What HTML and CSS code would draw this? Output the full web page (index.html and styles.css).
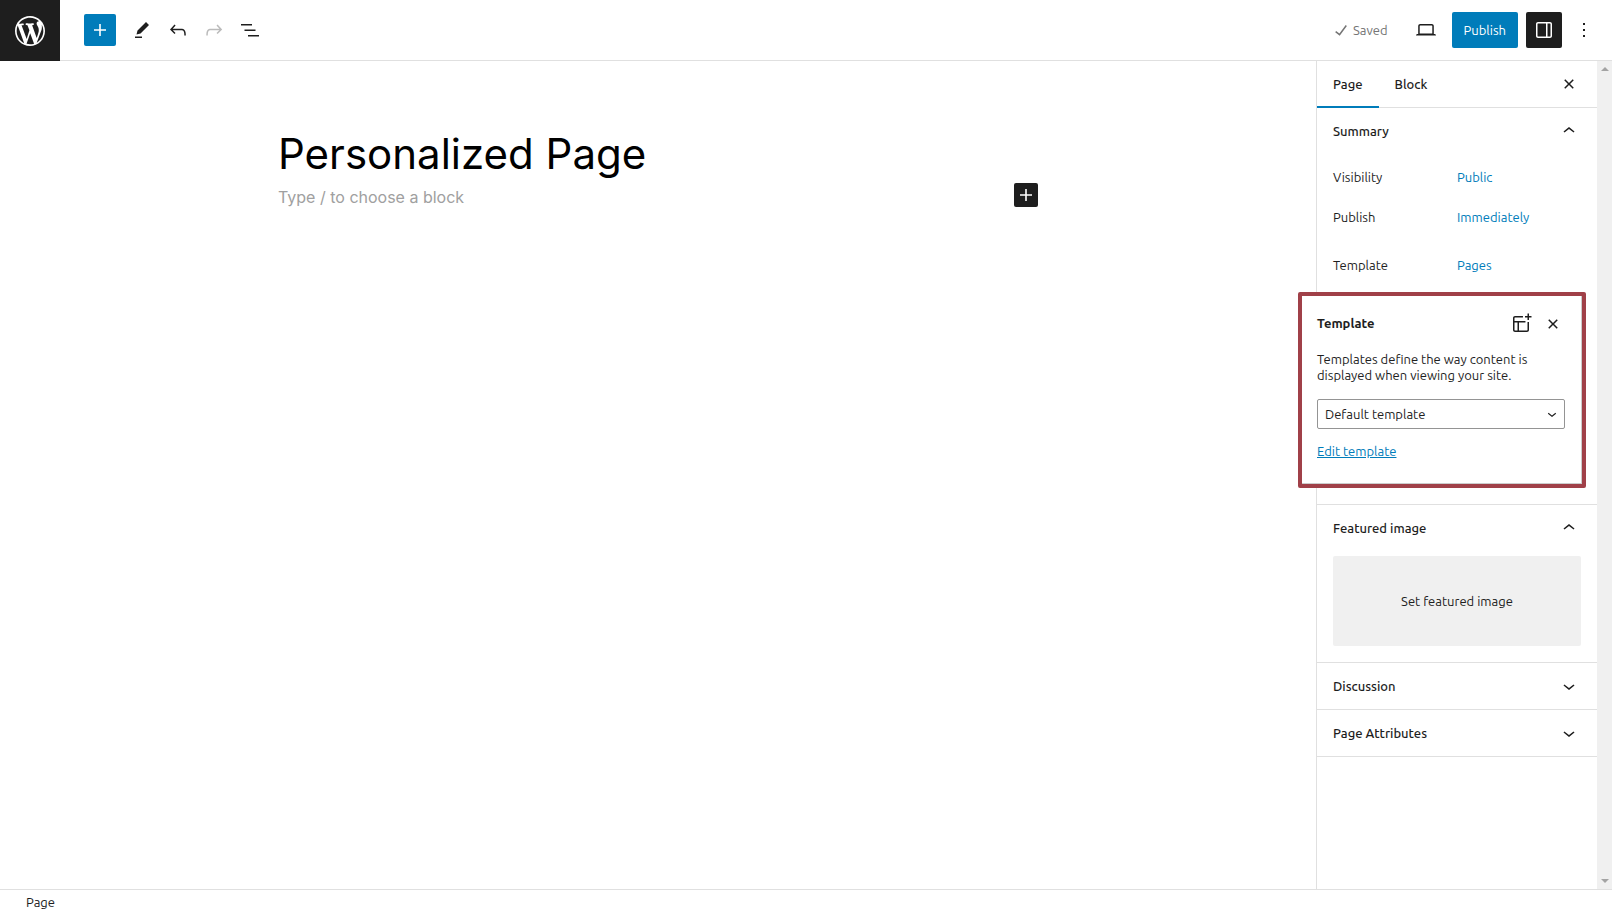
FILE: index.html
```html
<!DOCTYPE html>
<html lang="en">
<head>
    <meta charset="UTF-8">
    <title>Edit Page</title>
    <link rel="stylesheet" href="styles.css">
</head>
<body>
    <header class="header">
        <a class="site-logo" href="#" aria-label="View Pages">
            <svg width="36" height="36" viewBox="-2 -2 24 24"><path d="M20 10c0-5.51-4.49-10-10-10C4.48 0 0 4.49 0 10c0 5.52 4.48 10 10 10 5.51 0 10-4.48 10-10zM7.78 15.37L4.37 6.22c.55-.02 1.17-.08 1.17-.08.5-.06.44-1.13-.06-1.11 0 0-1.45.11-2.37.11-.18 0-.37 0-.58-.01C4.12 2.69 6.87 1.11 10 1.11c2.33 0 4.45.87 6.05 2.34-.68-.11-1.65.39-1.65 1.58 0 .74.45 1.36.9 2.1.35.61.55 1.36.55 2.46 0 1.49-1.4 5-1.4 5l-3.03-8.37c.54-.02.82-.17.82-.17.5-.05.44-1.25-.06-1.22 0 0-1.44.12-2.38.12-.87 0-2.33-.12-2.33-.12-.5-.03-.56 1.2-.06 1.22l.92.08 1.26 3.41zM17.41 10c.24-.64.74-1.87.43-4.25.7 1.29 1.05 2.71 1.05 4.25 0 3.29-1.73 6.24-4.4 7.78.97-2.59 1.94-5.2 2.92-7.78zM6.1 18.09C3.12 16.65 1.11 13.53 1.11 10c0-1.3.23-2.48.72-3.59C3.25 10.3 4.67 14.2 6.1 18.09zm4.03-6.63l2.58 6.98c-.86.29-1.76.45-2.71.45-.79 0-1.57-.11-2.29-.33.81-2.38 1.62-4.74 2.42-7.1z"/></svg>
        </a>
        <div class="toolbar">
            <button type="button" class="inserter-toggle" aria-label="Toggle block inserter">
                <svg width="24" height="24" viewBox="0 0 24 24"><path d="M18 11.2h-5.2V6h-1.6v5.2H6v1.6h5.2V18h1.6v-5.2H18z"/></svg>
            </button>
            <button type="button" class="icon-button" aria-label="Tools">
                <svg width="24" height="24" viewBox="0 0 24 24"><path d="m19 7-3-3-8.5 8.5-1 4 4-1L19 7Zm-7 11.5H5V20h7v-1.5Z"/></svg>
            </button>
            <button type="button" class="icon-button" aria-label="Undo">
                <svg width="24" height="24" viewBox="0 0 24 24"><path d="M18.3 11.7c-.6-.6-1.4-.9-2.3-.9H6.7l2.9-3.3-1.1-1-4.5 5L8.5 16l1-1-2.7-2.7H16c.5 0 .9.2 1.3.5 1 1 1 3.4 1 4.5v.3h1.5v-.2c0-1.5 0-4.3-1.5-5.7z"/></svg>
            </button>
            <button type="button" class="icon-button" aria-label="Redo" disabled>
                <svg width="24" height="24" viewBox="0 0 24 24"><path d="M15.6 6.5l-1.1 1 2.9 3.3H8c-.9 0-1.7.3-2.3.9-1.4 1.5-1.4 4.2-1.4 5.6v.2h1.5v-.3c0-1.1 0-3.5 1-4.5.3-.3.7-.5 1.3-.5h9.2L14.5 15l1.1 1.1 4.6-4.6-4.6-5z"/></svg>
            </button>
            <button type="button" class="icon-button" aria-label="List View">
                <svg width="24" height="24" viewBox="0 0 24 24"><path d="M3 6h11v1.5H3V6Zm3.5 5.5h11V13h-11v-1.5ZM21 17H10v1.5h11V17Z"/></svg>
            </button>
        </div>
        <div class="settings">
            <span class="saved">
                <svg width="24" height="24" viewBox="0 0 24 24"><path d="M16.7 7.1l-6.3 8.5-3.3-2.5-.9 1.2 4.5 3.4L17.9 8z"/></svg>
                Saved
            </span>
            <button type="button" class="icon-button" aria-label="Preview">
                <svg width="24" height="24" viewBox="0 0 24 24"><path d="M20.5 16h-.7V8c0-1.1-.9-2-2-2H6.2c-1.1 0-2 .9-2 2v8h-.7c-.8 0-1.5.7-1.5 1.5h20c0-.8-.7-1.5-1.5-1.5zM5.7 8c0-.3.2-.5.5-.5h11.6c.3 0 .5.2.5.5v7.6H5.7V8z"/></svg>
            </button>
            <button type="button" class="publish">Publish</button>
            <button type="button" class="icon-button pressed" aria-label="Settings">
                <svg width="24" height="24" viewBox="0 0 24 24"><path fill-rule="evenodd" d="M18 4H6c-1.1 0-2 .9-2 2v12c0 1.1.9 2 2 2h12c1.1 0 2-.9 2-2V6c0-1.1-.9-2-2-2zm-4 14.5H6c-.3 0-.5-.2-.5-.5V6c0-.3.2-.5.5-.5h8v13zm4.5-.5c0 .3-.2.5-.5.5h-2.5v-13H18c.3 0 .5.2.5.5v12z"/></svg>
            </button>
            <button type="button" class="icon-button narrow" aria-label="Options">
                <svg width="24" height="24" viewBox="0 0 24 24"><path d="M13 19h-2v-2h2v2zm0-6h-2v-2h2v2zm0-6h-2V5h2v2z"/></svg>
            </button>
        </div>
    </header>

    <div class="editor">
        <main class="canvas">
            <div class="content">
                <h1>Personalized Page</h1>
                <div class="block-row">
                    <input type="text" class="block-input" placeholder="Type / to choose a block" aria-label="Add default block">
                    <button type="button" class="add-block" aria-label="Add block">
                        <svg width="24" height="24" viewBox="0 0 24 24"><path d="M18 11.2h-5.2V6h-1.6v5.2H6v1.6h5.2V18h1.6v-5.2H18z"/></svg>
                    </button>
                </div>
            </div>
        </main>

        <aside class="sidebar">
            <div class="tabs">
                <button type="button" class="tab active">Page</button>
                <button type="button" class="tab">Block</button>
                <button type="button" class="close" aria-label="Close settings">
                    <svg width="24" height="24" viewBox="0 0 24 24"><path d="M12 13.06l3.712 3.713 1.061-1.06L13.061 12l3.712-3.712-1.06-1.06L12 10.938 8.288 7.227l-1.061 1.06L10.939 12l-3.712 3.712 1.06 1.061L12 13.061z"/></svg>
                </button>
            </div>

            <section class="panel summary">
                <button type="button" class="panel-title">Summary
                    <svg width="24" height="24" viewBox="0 0 24 24"><path d="M6.5 12.4L12 8l5.5 4.4-.9 1.2L12 10l-4.5 3.6-1-1.2z"/></svg>
                </button>
                <div class="rows">
                    <div class="row">
                        <span class="row-label">Visibility</span>
                        <button type="button" class="link-button">Public</button>
                    </div>
                    <div class="row">
                        <span class="row-label">Publish</span>
                        <button type="button" class="link-button">Immediately</button>
                    </div>
                    <div class="row template-row">
                        <span class="row-label">Template</span>
                        <button type="button" class="link-button">Pages</button>

                        <div class="popover">
                            <div class="popover-header">
                                <h2>Template</h2>
                                <button type="button" class="small-button" aria-label="Add template">
                                    <svg width="24" height="24" viewBox="0 0 24 24"><path fill-rule="evenodd" d="M18.5 5.5V8H20V5.5H22.5V4H20V1.5H18.5V4H16V5.5H18.5ZM13.9624 4H6C4.89543 4 4 4.89543 4 6V18C4 19.1046 4.89543 20 6 20H18C19.1046 20 20 19.1046 20 18V10.0391H18.5V18C18.5 18.2761 18.2761 18.5 18 18.5H10L10 10.4917L16.4589 10.5139L16.4641 9.01389L5.5 8.97618V6C5.5 5.72386 5.72386 5.5 6 5.5H13.9624V4ZM5.5 10.4762V18C5.5 18.2761 5.72386 18.5 6 18.5H8.5L8.5 10.4865L5.5 10.4762Z"/></svg>
                                </button>
                                <button type="button" class="small-button" aria-label="Close">
                                    <svg width="24" height="24" viewBox="0 0 24 24"><path d="M12 13.06l3.712 3.713 1.061-1.06L13.061 12l3.712-3.712-1.06-1.06L12 10.938 8.288 7.227l-1.061 1.06L10.939 12l-3.712 3.712 1.06 1.061L12 13.061z"/></svg>
                                </button>
                            </div>
                            <p>Templates define the way content is displayed when viewing your site.</p>
                            <div class="select-wrap">
                                <select aria-label="Template">
                                    <option>Default template</option>
                                </select>
                                <svg width="18" height="18" viewBox="0 0 24 24"><path d="M17.5 11.6L12 16l-5.5-4.4.9-1.2L12 14l4.5-3.6 1 1.2z"/></svg>
                            </div>
                            <a class="edit-link" href="#">Edit template</a>
                        </div>
                    </div>
                </div>
            </section>

            <section class="panel">
                <button type="button" class="panel-title">Featured image
                    <svg width="24" height="24" viewBox="0 0 24 24"><path d="M6.5 12.4L12 8l5.5 4.4-.9 1.2L12 10l-4.5 3.6-1-1.2z"/></svg>
                </button>
                <button type="button" class="featured-image">Set featured image</button>
            </section>

            <section class="panel">
                <button type="button" class="panel-title">Discussion
                    <svg width="24" height="24" viewBox="0 0 24 24"><path d="M17.5 11.6L12 16l-5.5-4.4.9-1.2L12 14l4.5-3.6 1 1.2z"/></svg>
                </button>
            </section>

            <section class="panel">
                <button type="button" class="panel-title">Page Attributes
                    <svg width="24" height="24" viewBox="0 0 24 24"><path d="M17.5 11.6L12 16l-5.5-4.4.9-1.2L12 14l4.5-3.6 1 1.2z"/></svg>
                </button>
            </section>
        </aside>

        <div class="scrollbar">
            <span class="arrow-up"></span>
            <span class="arrow-down"></span>
        </div>
    </div>

    <footer class="footer">Page</footer>
</body>
</html>
```
FILE: styles.css
```css
* {
    box-sizing: border-box;
}

body {
    margin: 0;
    height: 100vh;
    display: flex;
    flex-direction: column;
    background: #fff;
    color: #1e1e1e;
    font-family: Ubuntu, "Noto Sans", sans-serif;
    font-size: 13px;
    line-height: 16px;
}

button {
    display: flex;
    align-items: center;
    justify-content: center;
    padding: 0;
    border: none;
    background: none;
    color: inherit;
    font: inherit;
    cursor: pointer;
}

svg {
    display: block;
    flex: none;
    fill: currentColor;
}

/* top bar */
.header {
    display: flex;
    align-items: center;
    height: 61px;
    border-bottom: 1px solid #e0e0e0;
}

.site-logo {
    display: flex;
    align-items: center;
    justify-content: center;
    width: 60px;
    height: 61px;
    margin-bottom: -1px;
    background: #1e1e1e;
    color: #fff;
}

.toolbar {
    display: flex;
    align-items: center;
    padding-left: 24px;
}

.inserter-toggle {
    width: 32px;
    height: 32px;
    margin-right: 8px;
    border-radius: 2px;
    background: #007cba;
    color: #fff;
}

.icon-button {
    width: 36px;
    height: 36px;
    border-radius: 2px;
}

.icon-button:disabled {
    color: #bbb;
}

.icon-button.pressed {
    background: #1e1e1e;
    color: #fff;
}

.icon-button.narrow {
    width: 28px;
}

.settings {
    display: flex;
    align-items: center;
    gap: 8px;
    margin-left: auto;
    padding-right: 14px;
}

.saved {
    display: flex;
    align-items: center;
    margin-right: 12px;
    color: #757575;
}

.publish {
    height: 36px;
    padding: 0 12px;
    border-radius: 2px;
    background: #007cba;
    color: #fff;
}

/* editor area */
.editor {
    display: flex;
    flex: 1;
    min-height: 0;
}

.canvas {
    flex: 1;
}

.content {
    max-width: 760px;
    margin: 0 auto;
    padding-top: 68px;
    font-family: Inter, sans-serif;
}

.content h1 {
    margin: 0;
    color: #000;
    font-size: 42px;
    font-weight: 400;
    line-height: 50px;
}

.block-row {
    display: flex;
    align-items: flex-start;
    padding-top: 4px;
}

.block-input {
    flex: 1;
    height: 28px;
    padding: 0;
    border: none;
    outline: none;
    font: 16px/28px Inter, sans-serif;
}

.block-input::placeholder {
    color: #a0a0a0;
}

.add-block {
    width: 24px;
    height: 24px;
    border-radius: 2px;
    background: #1e1e1e;
    color: #fff;
}

/* settings sidebar */
.sidebar {
    width: 281px;
    border-left: 1px solid #e0e0e0;
}

.tabs {
    display: flex;
    height: 47px;
    border-bottom: 1px solid #e0e0e0;
}

.tab {
    height: 47px;
    padding: 0 16px 2px;
    font-weight: 500;
}

.tab.active {
    box-shadow: inset 0 -2px #007cba;
}

.close {
    width: 24px;
    margin-left: auto;
    margin-right: 16px;
}

.panel {
    border-bottom: 1px solid #e0e0e0;
}

.panel-title {
    justify-content: space-between;
    width: 100%;
    height: 46px;
    padding: 0 16px;
    font-weight: 500;
}

.summary {
    height: 397px;
}

.rows {
    padding: 5px 16px;
}

.row {
    display: flex;
    align-items: center;
    height: 36px;
    margin-bottom: 4px;
}

.row-label {
    width: 124px;
}

.link-button {
    color: #007cba;
}

.template-row {
    position: relative;
    margin-top: 12px;
}

.popover {
    position: absolute;
    top: 45px;
    left: -35px;
    width: 288px;
    height: 196px;
    padding: 16px 17px 16px 15px;
    border: 4px solid #a04048;
    border-radius: 2px;
    background: #fff;
    box-shadow: inset -1px -1px #ccc;
}

.popover-header {
    display: flex;
    align-items: center;
    gap: 8px;
    height: 24px;
}

.popover-header h2 {
    flex: 1;
    margin: 0;
    padding-bottom: 2px;
    font-size: 13px;
    font-weight: 600;
    line-height: 16px;
}

.small-button {
    width: 24px;
    height: 24px;
}

.popover p {
    margin: 15px 0 16px;
}

.select-wrap {
    position: relative;
    margin-bottom: 14px;
}

.select-wrap select {
    display: block;
    width: 100%;
    height: 30px;
    padding: 0 26px 0 7px;
    border: 1px solid #949494;
    border-radius: 2px;
    background: #fff;
    color: inherit;
    font: inherit;
    appearance: none;
}

.select-wrap svg {
    position: absolute;
    top: 6px;
    right: 4px;
    pointer-events: none;
}

.edit-link {
    color: #007cba;
}

.featured-image {
    width: calc(100% - 32px);
    height: 90px;
    margin: 5px 16px 16px;
    border-radius: 2px;
    background: #f0f0f0;
}

.scrollbar {
    display: flex;
    flex-direction: column;
    align-items: center;
    justify-content: space-between;
    width: 15px;
    padding: 6px 0;
    background: #f0f0f0;
}

.arrow-up,
.arrow-down {
    border: 4px solid transparent;
}

.arrow-up {
    border-top: none;
    border-bottom-color: #a3a3a3;
}

.arrow-down {
    border-bottom: none;
    border-top-color: #a3a3a3;
}

.footer {
    height: 25px;
    padding: 4px 26px;
    border-top: 1px solid #e0e0e0;
}
```
